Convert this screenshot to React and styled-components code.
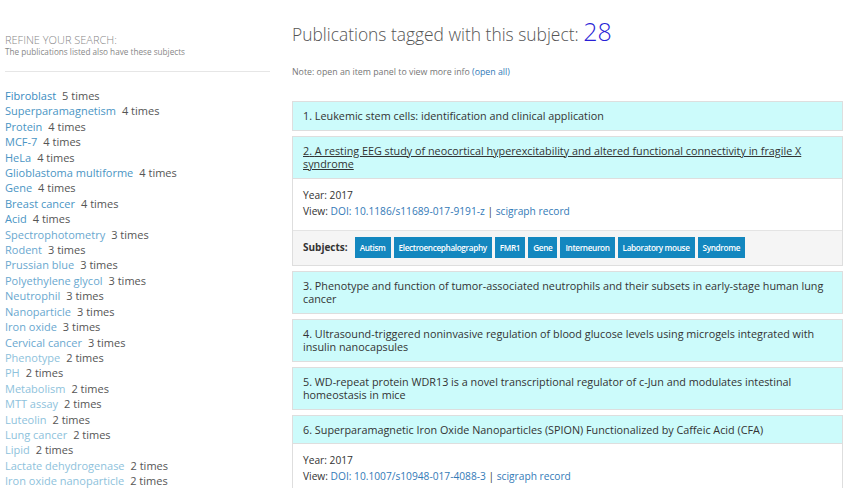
import React from 'react'
import styled, { createGlobalStyle } from 'styled-components'

const GlobalStyle = createGlobalStyle`
  body {
    margin: 0;
    background: #fff;
    font-family: 'Open Sans', 'DejaVu Sans', sans-serif;
    color: #333;
  }
`

const Page = styled.div`
  display: flex;
  gap: 22px;
  padding: 0 7px 0 5px;
  width: 850px;
  height: 488px;
  box-sizing: border-box;
  overflow: hidden;
`

const Sidebar = styled.aside`
  width: 265px;
  flex-shrink: 0;
  padding-top: 33px;
`

const RefineTitle = styled.div`
  font-size: 11px;
  font-weight: 300;
  color: #888;
  text-transform: uppercase;
  line-height: 13px;
`

const RefineSub = styled.div`
  font-size: 8.2px;
  color: #888;
  line-height: 11px;
`

const Rule = styled.hr`
  border: 0;
  border-top: 1px solid #e6e6e6;
  margin: 14px 0 16px;
`

const SubjectList = styled.ul`
  list-style: none;
  margin: 0;
  padding: 0;
`

const SubjectItem = styled.li`
  font-size: 11px;
  line-height: 15.4px;
  color: #555;
  white-space: nowrap;
`

const SubjectLink = styled.a`
  color: ${(p) => p.$color};
  text-decoration: none;
  margin-right: 6px;
`

const Main = styled.main`
  flex: 1;
  padding-top: 13px;
`

const Heading = styled.h1`
  margin: 0;
  font-size: 17.4px;
  font-weight: 300;
  color: #555;
  line-height: 36px;
`

const Count = styled.span`
  color: #2a1fd6;
  font-size: 25px;
`

const Note = styled.p`
  margin: 14px 0 23px;
  font-size: 8.8px;
  color: #777;
  line-height: 12px;
`

const Link = styled.a`
  color: #337ab7;
  text-decoration: none;
`

const Panel = styled.div`
  border: 1px solid #dedede;
  margin-bottom: 5px;
  background: #fff;
`

const PanelHeading = styled.div`
  background: #ccfbfb;
  padding: 7px 10px;
  font-size: 10.8px;
  line-height: 13.5px;
  color: #333;
  text-decoration: ${(p) => (p.$open ? 'underline' : 'none')};
`

const PanelBody = styled.div`
  padding: 8px 10px 11px;
  font-size: 10.2px;
  line-height: 16px;
  color: #333;
  border-top: 1px solid #dedede;
`

const PanelFooter = styled.div`
  display: flex;
  align-items: center;
  gap: 3px;
  background: #f5f5f5;
  border-top: 1px solid #e4e4e4;
  padding: 6px 10px 7px;
`

const SubjectsLabel = styled.span`
  font-size: 10px;
  font-weight: 700;
  color: #333;
  margin-right: 4px;
`

const Tag = styled.span`
  background: #1387bf;
  color: #fff;
  font-size: 8.2px;
  font-weight: 600;
  letter-spacing: -0.35px;
  line-height: 21px;
  padding: 0 5px;
`

const subjects = [
  ['Fibroblast', 5],
  ['Superparamagnetism', 4],
  ['Protein', 4],
  ['MCF-7', 4],
  ['HeLa', 4],
  ['Glioblastoma multiforme', 4],
  ['Gene', 4],
  ['Breast cancer', 4],
  ['Acid', 4],
  ['Spectrophotometry', 3],
  ['Rodent', 3],
  ['Prussian blue', 3],
  ['Polyethylene glycol', 3],
  ['Neutrophil', 3],
  ['Nanoparticle', 3],
  ['Iron oxide', 3],
  ['Cervical cancer', 3],
  ['Phenotype', 2],
  ['PH', 2],
  ['Metabolism', 2],
  ['MTT assay', 2],
  ['Luteolin', 2],
  ['Lung cancer', 2],
  ['Lipid', 2],
  ['Lactate dehydrogenase', 2],
  ['Iron oxide nanoparticle', 2],
]

const shade = { 5: '#3a8cbf', 4: '#4a95c4', 3: '#6aa8cf', 2: '#8ec2dc' }

const publications = [
  { title: 'Leukemic stem cells: identification and clinical application' },
  {
    title:
      'A resting EEG study of neocortical hyperexcitability and altered functional connectivity in fragile X syndrome',
    open: true,
    year: 2017,
    doi: '10.1186/s11689-017-9191-z',
    tags: [
      'Autism',
      'Electroencephalography',
      'FMR1',
      'Gene',
      'Interneuron',
      'Laboratory mouse',
      'Syndrome',
    ],
  },
  {
    title:
      'Phenotype and function of tumor-associated neutrophils and their subsets in early-stage human lung cancer',
  },
  {
    title:
      'Ultrasound-triggered noninvasive regulation of blood glucose levels using microgels integrated with insulin nanocapsules',
  },
  {
    title:
      'WD-repeat protein WDR13 is a novel transcriptional regulator of c-Jun and modulates intestinal homeostasis in mice',
  },
  {
    title:
      'Superparamagnetic Iron Oxide Nanoparticles (SPION) Functionalized by Caffeic Acid (CFA)',
    year: 2017,
    doi: '10.1007/s10948-017-4088-3',
    tags: ['Iron oxide nanoparticle'],
  },
]

const Publication = ({ index, title, open, year, doi, tags }) => (
  <Panel>
    <PanelHeading $open={open}>
      {index}. {title}
    </PanelHeading>
    {year && (
      <PanelBody>
        Year: {year}
        <br />
        View: <Link href="#doi">DOI: {doi}</Link> | <Link href="#scigraph">scigraph record</Link>
      </PanelBody>
    )}
    {year && tags && (
      <PanelFooter>
        <SubjectsLabel>Subjects:</SubjectsLabel>
        {tags.map((t) => (
          <Tag key={t}>{t}</Tag>
        ))}
      </PanelFooter>
    )}
  </Panel>
)

export default function App() {
  return (
    <>
      <GlobalStyle />
      <Page>
        <Sidebar>
          <RefineTitle>Refine your search:</RefineTitle>
          <RefineSub>The publications listed also have these subjects</RefineSub>
          <Rule />
          <SubjectList>
            {subjects.map(([name, n]) => (
              <SubjectItem key={name}>
                <SubjectLink href="#subject" $color={shade[n]}>
                  {name}
                </SubjectLink>
                {n} times
              </SubjectItem>
            ))}
          </SubjectList>
        </Sidebar>
        <Main>
          <Heading>
            Publications tagged with this subject: <Count>28</Count>
          </Heading>
          <Note>
            Note: open an item panel to view more info <Link href="#all">(open all)</Link>
          </Note>
          {publications.map((p, i) => (
            <Publication key={i} index={i + 1} {...p} />
          ))}
        </Main>
      </Page>
    </>
  )
}
